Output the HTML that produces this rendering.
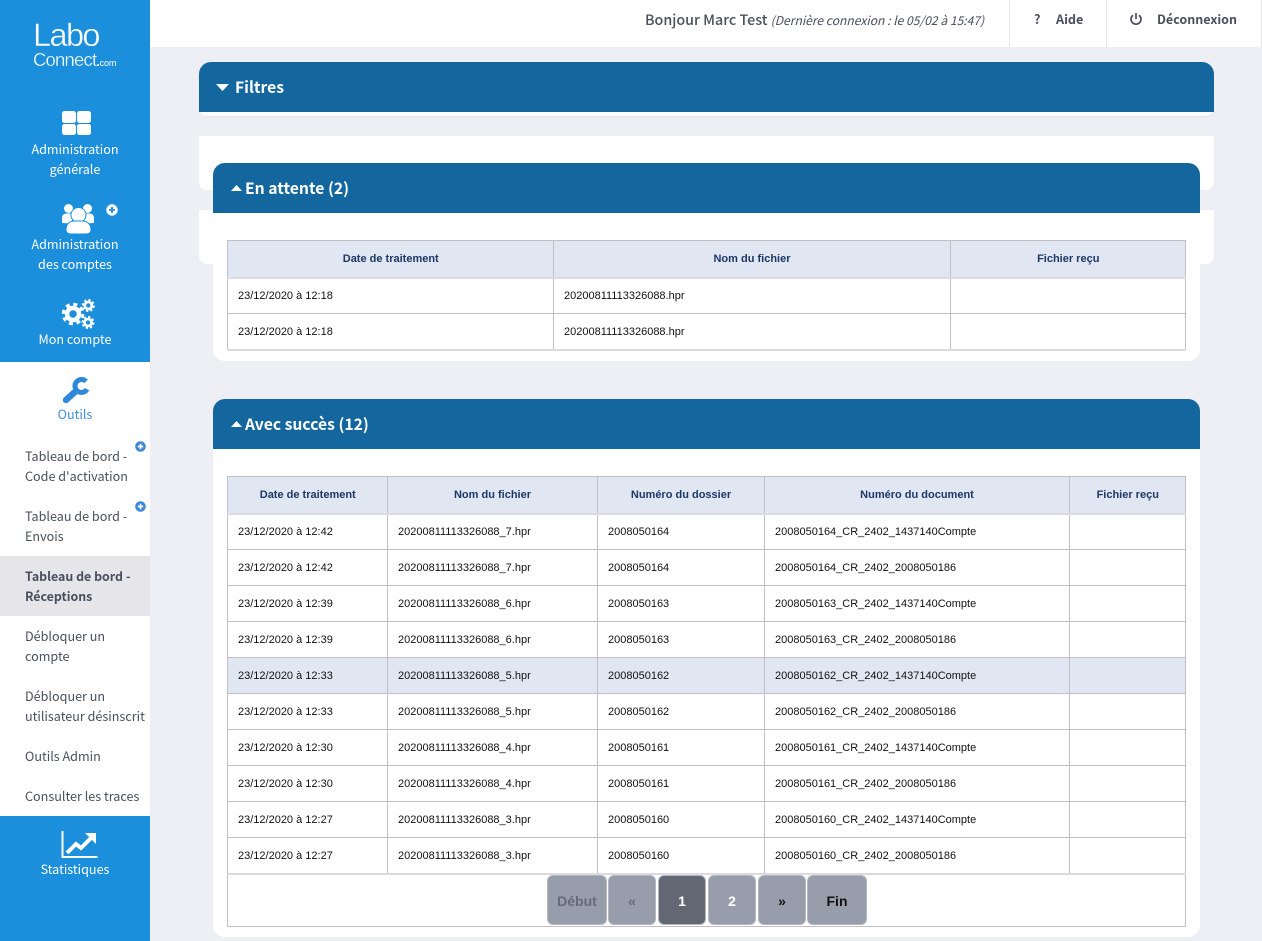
<!DOCTYPE html>
<html lang="fr"><head><meta charset="utf-8"><title>LaboConnect</title>
<style>
*{box-sizing:border-box}
html,body{margin:0;padding:0;width:1262px;height:941px;overflow:hidden;background:#eeeff4}
body{position:relative;font-family:"Noto Sans CJK JP","Liberation Sans",sans-serif;color:#4a4f5c}
.a{position:absolute}
.t{position:absolute;white-space:nowrap;line-height:20px;font-size:12.6px}
.c{text-align:center;left:0;width:150px;color:#fff}
.m{left:25px;color:#4a4f5c}
.hd{position:absolute;background:#14679e;color:#fff;font-weight:700;font-size:15.7px;line-height:49px;height:50px;border-radius:12px 12px 0 0}
.w{position:absolute;background:#fff}
table{position:absolute;border-collapse:collapse;table-layout:fixed;font-family:"Liberation Sans",Arial,sans-serif;font-size:11px;color:#111}
th{background:#e1e7f2;color:#1c3766;font-size:11px;font-weight:700;height:37px;border:1px solid #c0c0c4;border-bottom:2px solid #dcdcdf;padding:0 0 0 1px;text-align:center}
td{height:36px;border:1px solid #c0c0c4;padding:0 0 0 10.5px;white-space:nowrap}
td:first-child{padding-left:10px}
tr.s td{background:#e1e7f2}
tr.l td{padding-top:1px}
.p{position:absolute;top:875px;height:50px;background:#989dac;border:1px solid #b4b7c2;border-radius:6px;font:700 14px/50px "Liberation Sans",Arial,sans-serif;text-align:center;color:#111}
</style></head><body>

<div class="a" style="left:150px;top:0;width:1112px;height:47px;background:#fff"></div>
<div class="a" style="left:1009px;top:0;width:1px;height:47px;background:#e3e8f0"></div>
<div class="a" style="left:1106px;top:0;width:1px;height:47px;background:#e3e8f0"></div>
<div class="a" style="left:1261px;top:0;width:1px;height:47px;background:#e3e8f0"></div>
<div class="t" style="left:645px;top:10px;font-size:14.3px;font-weight:500;color:#4a4f5c">Bonjour Marc Test <i style="font-size:12.1px;font-weight:400">(Dernière connexion : le 05/02 à 15:47)</i></div>
<div class="t" style="left:1034px;top:9px;font-size:12.6px;font-weight:700">?</div>
<div class="t" style="left:1056px;top:9px;font-size:12.6px;font-weight:700">Aide</div>
<svg class="a" style="left:1129px;top:12px" width="14" height="14" viewBox="0 0 14 14" fill="none" stroke="#4a4f5c" stroke-width="1.7"><path d="M4 3.2a5 5 0 1 0 6 0"/><path d="M7 1v6"/></svg>
<div class="t" style="left:1157px;top:9px;font-size:12.5px;font-weight:700">Déconnexion</div>

<!-- sidebar -->
<div class="a" style="left:0;top:0;width:150px;height:941px;background:#1b8fdb"></div>
<div class="a" style="left:0;top:362px;width:150px;height:454px;background:#fff"></div>
<div class="a" style="left:0;top:556px;width:150px;height:60px;background:#e5e5ea"></div>

<div class="t" style="left:33px;top:20px;line-height:30px;font-size:32.5px;font-family:'Liberation Sans',sans-serif;color:#fff;letter-spacing:-1.6px;font-weight:400;-webkit-text-stroke:.4px #1b8fdb">Labo</div>
<div class="t" style="left:33px;top:50px;line-height:20px;font-size:18.5px;color:#fff;letter-spacing:-.8px;font-family:'Liberation Sans',sans-serif;-webkit-text-stroke:.3px #1b8fdb">Connect<span style="font-size:9px;letter-spacing:-.1px;-webkit-text-stroke:0"><b style="font-size:12px">.</b>com</span></div>

<svg class="a" style="left:62px;top:111px" width="29" height="24" fill="#fff"><rect x="0" y="0" width="14" height="12" rx="2.5"/><rect x="15" y="0" width="14" height="12" rx="2.5"/><rect x="0" y="13" width="14" height="11" rx="2.5"/><rect x="15" y="13" width="14" height="11" rx="2.5"/></svg>
<div class="t c" style="top:139px">Administration</div>
<div class="t c" style="top:159px">générale</div>

<svg class="a" style="left:60px;top:202px" width="36" height="33" fill="#fff"><circle cx="8.5" cy="6.500" r="4.500"/><circle cx="27.500" cy="6.500" r="4.500"/><path d="M2 21v-5c0-3 2-4.500 5-4.500h5v10z"/><path d="M34 21v-5c0-3-2-4.500-5-4.500h-5v10z"/><circle cx="18.500" cy="13" r="7.500" stroke="#1b8fdb" stroke-width="1"/><path d="M6 28c0-6 4-9 8-9h9c4 0 8 3 8 9 0 3-2 4-5 4H11c-3 0-5-1-5-4z" stroke="#1b8fdb" stroke-width="1"/></svg>
<svg class="a" style="left:106px;top:204px" width="12" height="12"><circle cx="6" cy="6" r="5.700" fill="#fff"/><path d="M6 3v6M3 6h6" stroke="#1b8fdb" stroke-width="1.800"/></svg>
<div class="t c" style="top:234px">Administration</div>
<div class="t c" style="top:254px">des comptes</div>

<svg class="a" style="left:61px;top:298px" width="35" height="32" fill="none" stroke="#fff"><circle cx="12" cy="16" r="6" stroke-width="4.500"/><circle cx="12" cy="16" r="9.800" stroke-width="3" stroke-dasharray="4 3.700"/><circle cx="27.300" cy="7.500" r="3.500" stroke-width="2.600"/><circle cx="27.300" cy="7.500" r="5.500" stroke-width="2" stroke-dasharray="2.300 2"/><circle cx="27" cy="24.500" r="3.500" stroke-width="2.600"/><circle cx="27" cy="24.500" r="5.500" stroke-width="2" stroke-dasharray="2.300 2"/></svg>
<div class="t c" style="top:329px">Mon compte</div>

<svg class="a" style="left:61px;top:375px" width="32" height="30" fill="none" stroke="#2f88da"><path d="M5 25 15 16" stroke-width="6.500" stroke-linecap="round"/><path d="M25.100 6.400A6.500 6.500 0 1 0 26.100 14.250" stroke-width="5"/></svg>
<div class="t c" style="top:404px;color:#3f8fdf">Outils</div>

<div class="t m" style="top:446px">Tableau de bord -</div>
<div class="t m" style="top:466px">Code d'activation</div>
<svg class="a" style="left:135px;top:441px" width="11" height="11"><circle cx="5.500" cy="5.500" r="5.300" fill="#3e87d4"/><path d="M5.500 2.800v5.400M2.800 5.500h5.400" stroke="#fff" stroke-width="1.700"/></svg>
<div class="t m" style="top:506px">Tableau de bord -</div>
<div class="t m" style="top:526px">Envois</div>
<svg class="a" style="left:135px;top:501px" width="11" height="11"><circle cx="5.500" cy="5.500" r="5.300" fill="#3e87d4"/><path d="M5.500 2.800v5.400M2.800 5.500h5.400" stroke="#fff" stroke-width="1.700"/></svg>
<div class="t m" style="top:566px;font-weight:700;font-size:12.4px">Tableau de bord -</div>
<div class="t m" style="top:586px;font-weight:700;font-size:12.4px">Réceptions</div>
<div class="t m" style="top:626px">Débloquer un</div>
<div class="t m" style="top:646px">compte</div>
<div class="t m" style="top:686px">Débloquer un</div>
<div class="t m" style="top:706px">utilisateur désinscrit</div>
<div class="t m" style="top:746px">Outils Admin</div>
<div class="t m" style="top:786px">Consulter les traces</div>

<svg class="a" style="left:61px;top:830px" width="37" height="29"><path d="M1.500 1v26h35" fill="none" stroke="#fff" stroke-width="2"/><path d="M6 23l9-9 5 4L30 8" fill="none" stroke="#fff" stroke-width="4"/><path d="M24 3h11v11z" fill="#fff"/></svg>
<div class="t c" style="top:859px">Statistiques</div>

<!-- content -->
<div class="w" style="left:199px;top:100px;width:1015px;height:16px;border-radius:0 0 8px 8px;box-shadow:0 1px 1px #e3e4ea"></div>
<div class="hd" style="left:199px;top:62px;width:1015px;padding-left:36px">Filtres</div>
<svg class="a" style="left:216px;top:84px" width="13" height="7"><path d="M0 0h13L6.500 7z" fill="#fff"/></svg>

<div class="w" style="left:199px;top:136px;width:1015px;height:54px;border-radius:0 0 8px 8px"></div>
<div class="w" style="left:199px;top:210px;width:1015px;height:54px;border-radius:0 0 8px 8px"></div>

<div class="w" style="left:213px;top:200px;width:987px;height:161px;border-radius:0 0 12px 12px"></div>
<div class="hd" style="left:213px;top:163px;width:987px;padding-left:32px">En attente (2)</div>
<svg class="a" style="left:231px;top:185px" width="11" height="6"><path d="M0 6h11L5.500 0z" fill="#fff"/></svg>

<table style="left:227px;top:240px;width:959px">
<colgroup><col style="width:325.500px"><col style="width:397px"><col></colgroup>
<tr><th>Date de traitement</th><th>Nom du fichier</th><th>Fichier reçu</th></tr>
<tr><td>23/12/2020 à 12:18</td><td>20200811113326088.hpr</td><td></td></tr>
<tr class="l"><td style="border-bottom:2px solid #dcdcdf">23/12/2020 à 12:18</td><td style="border-bottom:2px solid #dcdcdf">20200811113326088.hpr</td><td style="border-bottom:2px solid #dcdcdf"></td></tr>
</table>

<div class="w" style="left:213px;top:440px;width:987px;height:497px;border-radius:0 0 12px 12px"></div>
<div class="hd" style="left:213px;top:399px;width:987px;padding-left:32px">Avec succès (12)</div>
<svg class="a" style="left:231px;top:421px" width="11" height="6"><path d="M0 6h11L5.500 0z" fill="#fff"/></svg>

<table style="left:227px;top:476px;width:959px">
<colgroup><col style="width:159.500px"><col style="width:210px"><col style="width:167px"><col style="width:305px"><col></colgroup>
<tr><th>Date de traitement</th><th>Nom du fichier</th><th>Numéro du dossier</th><th>Numéro du document</th><th>Fichier reçu</th></tr>
<tr><td>23/12/2020 à 12:42</td><td>20200811113326088_7.hpr</td><td>2008050164</td><td>2008050164_CR_2402_1437140Compte</td><td></td></tr>
<tr><td>23/12/2020 à 12:42</td><td>20200811113326088_7.hpr</td><td>2008050164</td><td>2008050164_CR_2402_2008050186</td><td></td></tr>
<tr><td>23/12/2020 à 12:39</td><td>20200811113326088_6.hpr</td><td>2008050163</td><td>2008050163_CR_2402_1437140Compte</td><td></td></tr>
<tr><td>23/12/2020 à 12:39</td><td>20200811113326088_6.hpr</td><td>2008050163</td><td>2008050163_CR_2402_2008050186</td><td></td></tr>
<tr class="s"><td>23/12/2020 à 12:33</td><td>20200811113326088_5.hpr</td><td>2008050162</td><td>2008050162_CR_2402_1437140Compte</td><td></td></tr>
<tr><td>23/12/2020 à 12:33</td><td>20200811113326088_5.hpr</td><td>2008050162</td><td>2008050162_CR_2402_2008050186</td><td></td></tr>
<tr><td>23/12/2020 à 12:30</td><td>20200811113326088_4.hpr</td><td>2008050161</td><td>2008050161_CR_2402_1437140Compte</td><td></td></tr>
<tr><td>23/12/2020 à 12:30</td><td>20200811113326088_4.hpr</td><td>2008050161</td><td>2008050161_CR_2402_2008050186</td><td></td></tr>
<tr><td>23/12/2020 à 12:27</td><td>20200811113326088_3.hpr</td><td>2008050160</td><td>2008050160_CR_2402_1437140Compte</td><td></td></tr>
<tr class="l"><td>23/12/2020 à 12:27</td><td>20200811113326088_3.hpr</td><td>2008050160</td><td>2008050160_CR_2402_2008050186</td><td></td></tr>
<tr><td colspan="5" style="height:53px;border-top:2px solid #dcdcdf"></td></tr>
</table>

<div class="p" style="left:547px;width:60px;color:#666a7a">Début</div>
<div class="p" style="left:608px;width:48px;color:#666a7a">«</div>
<div class="p" style="left:658px;width:48px;background:#636773;color:#fff">1</div>
<div class="p" style="left:708px;width:48px;color:#fff">2</div>
<div class="p" style="left:758px;width:48px">»</div>
<div class="p" style="left:807px;width:60px">Fin</div>
</body></html>
